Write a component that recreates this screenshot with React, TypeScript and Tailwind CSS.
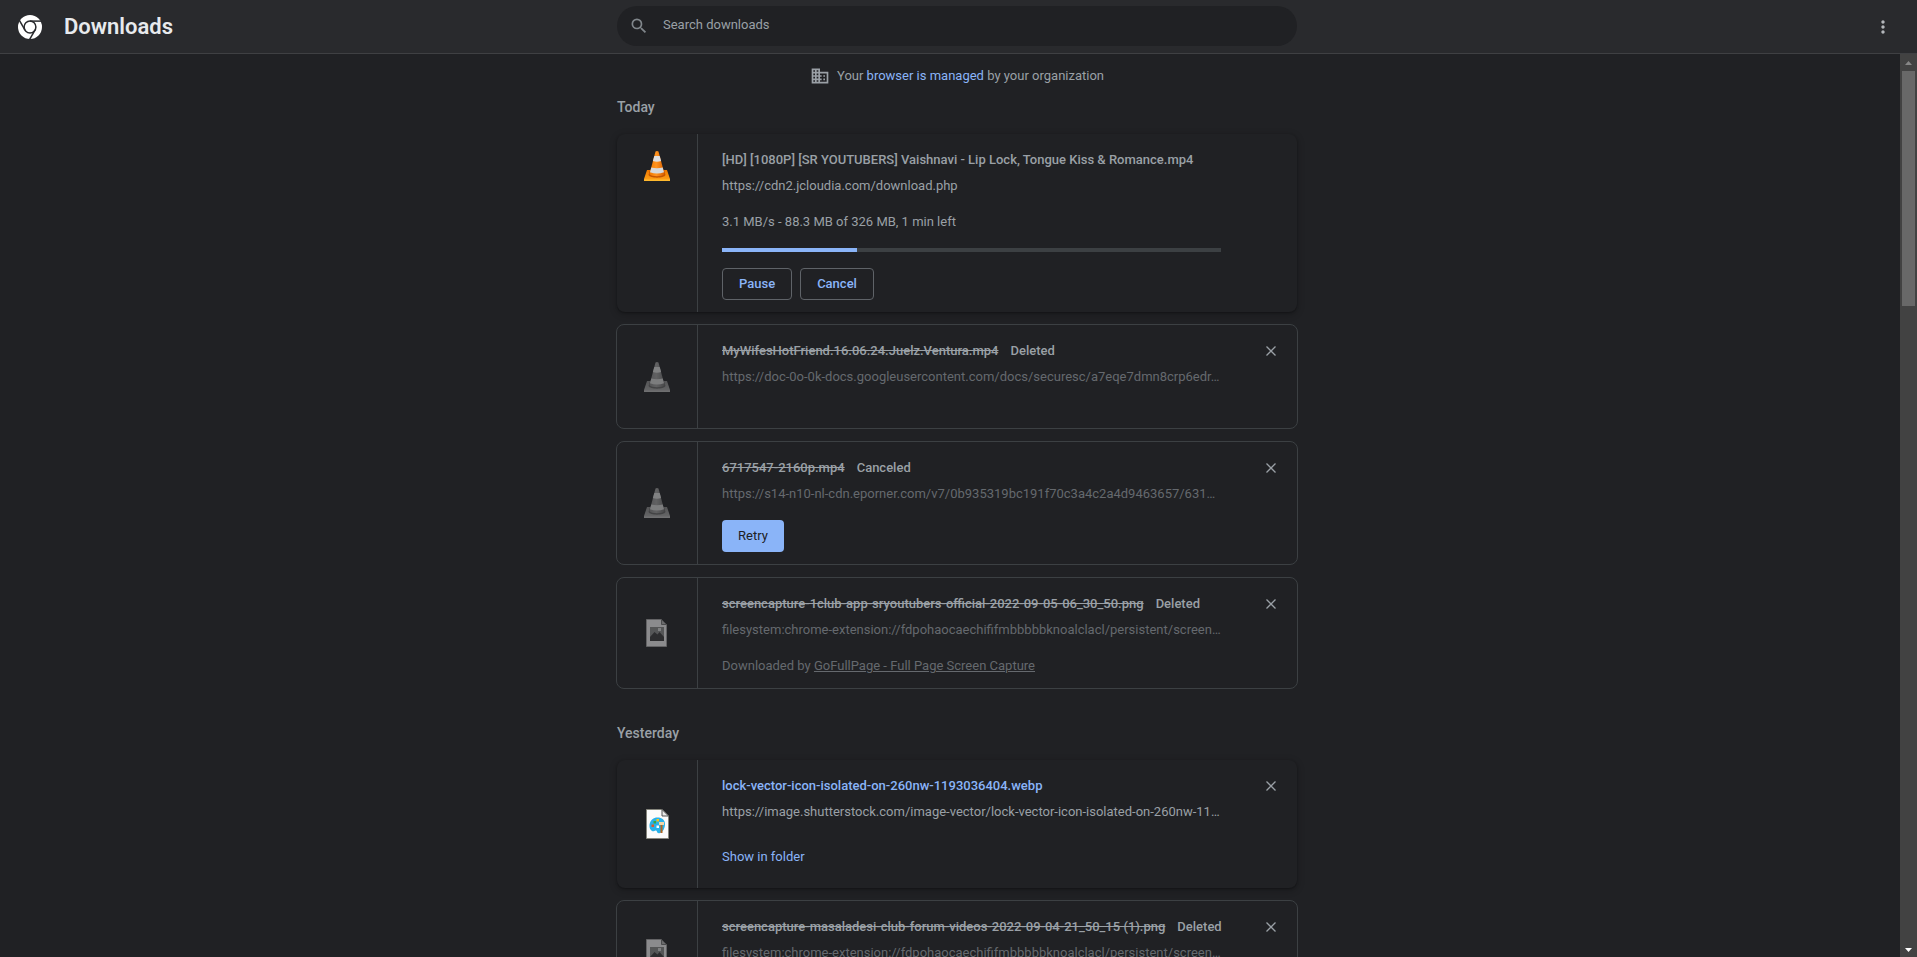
import type { ReactNode } from "react"
import { MdBusiness, MdMoreVert, MdSearch } from "react-icons/md"

interface DownloadItem {
  name: string
  url: string
  icon: "vlc" | "image" | "paint"
  state: "active" | "done" | "gone"
  tag?: string
  status?: string
  progress?: number
  extension?: string
}

interface DownloadGroup {
  day: string
  items: DownloadItem[]
}

const groups: DownloadGroup[] = [
  {
    day: "Today",
    items: [
      {
        name: "[HD] [1080P] [SR YOUTUBERS] Vaishnavi - Lip Lock, Tongue Kiss & Romance.mp4",
        url: "https://cdn2.jcloudia.com/download.php",
        icon: "vlc",
        state: "active",
        status: "3.1 MB/s - 88.3 MB of 326 MB, 1 min left",
        progress: 27,
      },
      {
        name: "MyWifesHotFriend.16.06.24.Juelz.Ventura.mp4",
        url: "https://doc-0o-0k-docs.googleusercontent.com/docs/securesc/a7eqe7dmn8crp6edr…",
        icon: "vlc",
        state: "gone",
        tag: "Deleted",
      },
      {
        name: "6717547-2160p.mp4",
        url: "https://s14-n10-nl-cdn.eporner.com/v7/0b935319bc191f70c3a4c2a4d9463657/631…",
        icon: "vlc",
        state: "gone",
        tag: "Canceled",
      },
      {
        name: "screencapture-1club-app-sryoutubers-official-2022-09-05-06_30_50.png",
        url: "filesystem:chrome-extension://fdpohaocaechififmbbbbbknoalclacl/persistent/screen…",
        icon: "image",
        state: "gone",
        tag: "Deleted",
        extension: "GoFullPage - Full Page Screen Capture",
      },
    ],
  },
  {
    day: "Yesterday",
    items: [
      {
        name: "lock-vector-icon-isolated-on-260nw-1193036404.webp",
        url: "https://image.shutterstock.com/image-vector/lock-vector-icon-isolated-on-260nw-11…",
        icon: "paint",
        state: "done",
      },
      {
        name: "screencapture-masaladesi-club-forum-videos-2022-09-04-21_50_15 (1).png",
        url: "filesystem:chrome-extension://fdpohaocaechififmbbbbbknoalclacl/persistent/screen…",
        icon: "image",
        state: "gone",
        tag: "Deleted",
      },
    ],
  },
]

const ChromeLogo = () => (
  <svg viewBox="0 0 24 24" className="size-6">
    <circle cx="12" cy="12" r="12" fill="#fff" />
    <g fill="none" stroke="#292a2d" strokeWidth="1.5">
      <circle cx="12" cy="12" r="5.900" />
      <path d="M12 6.100h13" />
      <path d="M12 6.100h13" transform="rotate(120 12 12)" />
      <path d="M12 6.100h13" transform="rotate(240 12 12)" />
    </g>
  </svg>
)

const VlcIcon = () => (
  <svg viewBox="0 0 32 32" className="size-8">
    <defs>
      <linearGradient id="cone" x1="0" x2="1" y1="0" y2="0">
        <stop offset="0" stopColor="#f07800" />
        <stop offset="0.45" stopColor="#ff9420" />
        <stop offset="1" stopColor="#d95f00" />
      </linearGradient>
      <linearGradient id="base" x1="0" x2="0" y1="0" y2="1">
        <stop offset="0" stopColor="#f07800" />
        <stop offset="1" stopColor="#ffa51a" />
      </linearGradient>
    </defs>
    <path d="M6 20h20l3 9v2H3v-2z" fill="url(#base)" />
    <path d="M3 29.500h26V31H3z" fill="#ffb92e" />
    <path d="M7.500 25l1.500-5h14l1.500 5c-1.500 3.500-15.500 3.500-17 0z" fill="#c45500" />
    <path d="M14.500 1.500q1.500-1 3 0L23.500 24c-1.500 3-13.500 3-15 0z" fill="url(#cone)" />
    <path d="M13.300 6h5.400l1.400 5q-4.100 1.300-8.200 0z" fill="#dde0e4" />
    <path d="M10.300 17.500q5.700 1.600 11.400 0l1.300 4.700q-7 2.800-14 0z" fill="#d5d9dd" />
  </svg>
)

const ImageIcon = () => (
  <svg viewBox="0 0 32 32" className="size-8">
    <path d="M5.500 2.500h15l5 5v22h-20z" fill="#f5f5f5" stroke="#a5a5a5" />
    <path d="M20.500 2.500v5h5z" fill="#b5b5b5" stroke="#777" />
    <path d="M9 10h14v14H9z" fill="#8b8b8b" />
    <path d="M9 20l4.500-5 3 2.500 2-2.500 4.500 5v4H9z" fill="#3a3a3a" />
    <path d="M17 11h3v3h-3z" fill="#dcdcdc" />
  </svg>
)

const PaintIcon = () => (
  <svg viewBox="0 0 32 32" className="size-8">
    <path d="M5.500 1.500h15.500l6.500 6.500v22.500h-22z" fill="#fbfbfb" stroke="#85857c" />
    <path d="M21 1.500v6.500h6.500z" fill="#e9e9e9" stroke="#555" />
    <path
      d="M16.500 9.500c4.500 0 7.500 2.500 7.500 6.500s-2 8-5 9c-3.500 1-2.500-2-4-2.500s-2 1.500-4 0.500C6.500 20 8 9.500 16.500 9.500z"
      fill="#29b2ea"
    />
    <path d="M15.500 17.500h2.500V20h-2.500z" fill="#fff" />
    <path d="M12.500 13h2.500v2.500h-2.500z" fill="#3aa845" />
    <path d="M10.500 16.500h2.500V19h-2.500z" fill="#e2572b" />
    <path d="M15.500 11H18v2.500h-2.500z" fill="#f5c518" />
    <path d="M18 14h5v3h-5z" fill="#f1d6a8" />
    <path d="M19.500 17h2v8h-2z" fill="#b5651d" />
  </svg>
)

const icons = {
  vlc: <VlcIcon />,
  image: <ImageIcon />,
  paint: <PaintIcon />,
}

const OutlineButton = ({ children }: { children: ReactNode }) => (
  <button type="button" className="h-8 rounded border border-[#5f6368] px-4 font-medium text-[#8ab4f8] hover:bg-[#8ab4f8]/10">
    {children}
  </button>
)

const cardStyles = {
  active: "shadow-[0_1px_2px_rgba(0,0,0,0.3),0_2px_6px_2px_rgba(0,0,0,0.15)]",
  done: "min-h-32 shadow-[0_1px_2px_rgba(0,0,0,0.3),0_2px_6px_2px_rgba(0,0,0,0.15)]",
  gone: "-mx-px min-h-[105px] border border-[#3c4043]",
}

const DownloadCard = ({ item }: { item: DownloadItem }) => {
  const gone = item.state === "gone"

  return (
    <li className={`flex rounded-lg bg-[#202124] ${cardStyles[item.state]}`}>
      <div
        className={`flex w-[81px] shrink-0 justify-center border-r border-[#3c4043] ${
          item.state === "active" ? "items-start pt-4" : "items-center"
        }`}
      >
        <div className={gone ? "opacity-50 grayscale" : ""}>{icons[item.icon]}</div>
      </div>

      <div className="min-w-0 flex-1 pt-4 pb-3 pl-6">
        <div className="flex gap-3 font-medium whitespace-nowrap">
          {item.state === "done" ? (
            <a href="#open" className="text-[#8ab4f8]">
              {item.name}
            </a>
          ) : (
            <span className={gone ? "line-through" : ""}>{item.name}</span>
          )}
          {item.tag && <span>{item.tag}</span>}
        </div>
        <p className={`mt-1.5 whitespace-nowrap ${gone ? "text-[#65696e]" : ""}`}>{item.url}</p>

        {item.status && <p className="mt-4">{item.status}</p>}
        {item.extension && (
          <p className="mt-4 text-[#65696e]">
            Downloaded by{" "}
            <a href="#extension" className="underline">
              {item.extension}
            </a>
          </p>
        )}
        {item.progress !== undefined && (
          <div className="mt-4 h-1 bg-[#3c4043]">
            <div className="h-full bg-[#8ab4f8]" style={{ width: `${item.progress}%` }} />
          </div>
        )}
        {item.state === "active" && (
          <div className="mt-4 flex gap-2">
            <OutlineButton>Pause</OutlineButton>
            <OutlineButton>Cancel</OutlineButton>
          </div>
        )}
        {item.tag === "Canceled" && (
          <button type="button" className="mt-4 block h-8 rounded bg-[#8ab4f8] px-4 text-[#202124]">
            Retry
          </button>
        )}
        {item.state === "done" && (
          <a href="#folder" className="mt-[25px] inline-block text-[#8ab4f8]">
            Show in folder
          </a>
        )}
      </div>

      <div className="flex w-[76px] shrink-0 items-start justify-end pt-3 pr-3">
        {item.state !== "active" && (
          <button type="button" aria-label={`Remove ${item.name} from list`} className="p-1.5">
            <svg viewBox="0 0 16 16" className="size-4" fill="none" stroke="currentColor" strokeWidth="1.3">
              <path d="M3.500 3.500l9 9M12.500 3.500l-9 9" />
            </svg>
          </button>
        )}
      </div>
    </li>
  )
}

const Header = () => (
  <header className="flex h-[54px] shrink-0 items-center border-b border-[#3f4043] bg-[#292a2d] pr-[3px]">
    <div className="flex flex-1">
      <div className="ml-[18px] flex items-center gap-[22px]">
        <ChromeLogo />
        <h1 className="text-[22px] leading-7 font-semibold text-[#e8eaed]">Downloads</h1>
      </div>
    </div>
    <label className="mt-1.5 flex h-10 w-[680px] items-center gap-3.5 self-start rounded-full bg-[#202124] px-3">
      <MdSearch className="size-5 text-[#80868b]" />
      <input
        type="search"
        aria-label="Search downloads"
        placeholder="Search downloads"
        className="min-w-0 flex-1 bg-transparent pb-0.5 outline-none placeholder:text-[#9aa0a6]"
      />
    </label>
    <div className="flex flex-1 justify-end">
      <button type="button" aria-label="More actions" className="mr-[21px]">
        <MdMoreVert className="size-5 text-[#b4b7bb]" />
      </button>
    </div>
  </header>
)

const ScrollBar = () => (
  <div className="flex w-[17px] shrink-0 flex-col items-center bg-[#424242]" aria-hidden="true">
    <svg viewBox="0 0 17 17" className="size-[17px]">
      <path d="M5 11l3.500-4 3.500 4z" fill="#868686" />
    </svg>
    <div className="h-[235px] w-[13px] bg-[#686868]" />
    <svg viewBox="0 0 17 17" className="mt-auto size-[17px]">
      <path d="M5 8h7l-3.500 4z" fill="#fff" />
    </svg>
  </div>
)

const App = () => {
  return (
    <div className="flex h-screen flex-col overflow-hidden bg-[#202124] font-[Roboto,sans-serif] text-[13px] leading-5 text-[#9aa0a6]">
      <Header />
      <div className="flex min-h-0 flex-1">
        <main className="min-w-0 flex-1 overflow-hidden pt-3 pl-[14px]">
          <div className="mx-auto max-w-[680px]">
            <p className="flex items-center justify-center gap-[7px]">
              <MdBusiness className="size-5" />
              <span>
                Your{" "}
                <a href="#managed" className="text-[#8ab4f8]">
                  browser is managed
                </a>{" "}
                by your organization
              </span>
            </p>
            <div className="mt-[11px] flex flex-col gap-[34px]">
              {groups.map((group) => (
                <section key={group.day}>
                  <h2 className="mb-[17px] text-sm leading-5 font-medium">{group.day}</h2>
                  <ul className="flex flex-col gap-3">
                    {group.items.map((item) => (
                      <DownloadCard key={item.name} item={item} />
                    ))}
                  </ul>
                </section>
              ))}
            </div>
          </div>
        </main>
        <ScrollBar />
      </div>
    </div>
  )
}

export default App
